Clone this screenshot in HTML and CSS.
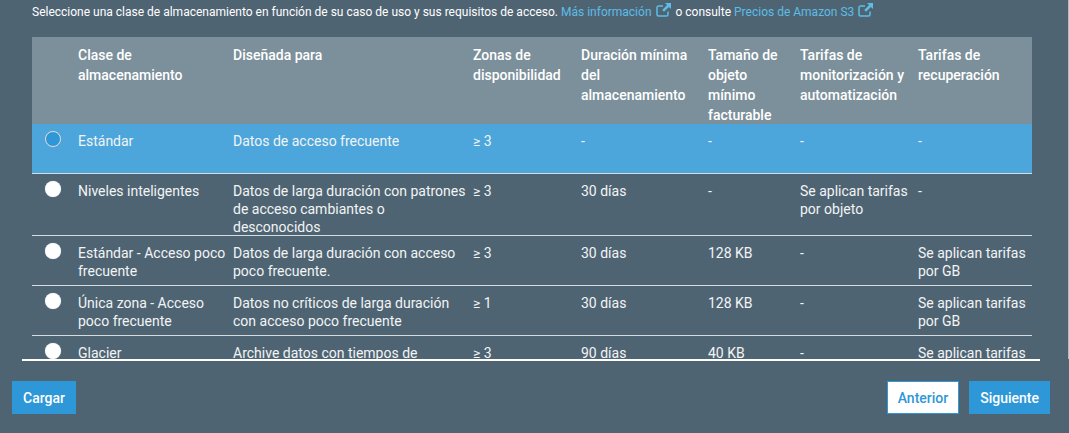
FILE: index.html
```html
<!DOCTYPE html>
<html lang="en">
<head>
    <meta charset="UTF-8">
    <title>Clase de almacenamiento</title>
    <link rel="stylesheet" href="styles.css">
</head>
<body>
    <p class="intro">
        Seleccione una clase de almacenamiento en función de su caso de uso y sus requisitos de acceso.
        <a href="#">Más información</a>
        <svg class="ext" viewBox="0 0 15 14"><path d="M12 8.5v3a1.5 1.5 0 0 1-1.5 1.5h-8A1.5 1.5 0 0 1 1 11.5v-7A1.5 1.5 0 0 1 2.500 3H7"/><path class="arrow" d="M9 0H15V6L12.900 3.900 8 8.800 6.200 7 11.100 2.100z"/></svg>
        o consulte
        <a href="#">Precios de Amazon S3</a>
        <svg class="ext" viewBox="0 0 15 14"><path d="M12 8.5v3a1.5 1.5 0 0 1-1.5 1.5h-8A1.5 1.5 0 0 1 1 11.5v-7A1.5 1.5 0 0 1 2.500 3H7"/><path class="arrow" d="M9 0H15V6L12.900 3.900 8 8.800 6.200 7 11.100 2.100z"/></svg>
    </p>

    <div class="table-wrap">
        <table class="classes">
            <colgroup>
                <col class="c-radio">
                <col class="c-name">
                <col class="c-for">
                <col class="c-zones">
                <col class="c-dur">
                <col class="c-size">
                <col class="c-mon">
                <col class="c-ret">
            </colgroup>
            <thead>
                <tr>
                    <th></th>
                    <th>Clase de almacenamiento</th>
                    <th>Diseñada para</th>
                    <th>Zonas de disponibilidad</th>
                    <th>Duración mínima del almacenamiento</th>
                    <th><div class="four-lines">Tamaño de objeto mínimo facturable</div></th>
                    <th>Tarifas de monitorización y automatización</th>
                    <th>Tarifas de recuperación</th>
                </tr>
            </thead>
            <tbody>
                <tr class="selected">
                    <td><span class="radio"></span></td>
                    <td>Estándar</td>
                    <td>Datos de acceso frecuente</td>
                    <td>≥ 3</td>
                    <td>-</td>
                    <td>-</td>
                    <td>-</td>
                    <td>-</td>
                </tr>
                <tr>
                    <td><span class="radio"></span></td>
                    <td>Niveles inteligentes</td>
                    <td><div class="three-lines">Datos de larga duración con patrones de acceso cambiantes o desconocidos</div></td>
                    <td>≥ 3</td>
                    <td>30 días</td>
                    <td>-</td>
                    <td>Se aplican tarifas por objeto</td>
                    <td>-</td>
                </tr>
                <tr>
                    <td><span class="radio"></span></td>
                    <td>Estándar - Acceso poco frecuente</td>
                    <td>Datos de larga duración con acceso poco frecuente.</td>
                    <td>≥ 3</td>
                    <td>30 días</td>
                    <td>128 KB</td>
                    <td>-</td>
                    <td>Se aplican tarifas por GB</td>
                </tr>
                <tr>
                    <td><span class="radio"></span></td>
                    <td>Única zona - Acceso poco frecuente</td>
                    <td>Datos no críticos de larga duración con acceso poco frecuente</td>
                    <td>≥ 1</td>
                    <td>30 días</td>
                    <td>128 KB</td>
                    <td>-</td>
                    <td>Se aplican tarifas por GB</td>
                </tr>
                <tr>
                    <td><span class="radio"></span></td>
                    <td>Glacier</td>
                    <td>Archive datos con tiempos de recuperación de minutos a horas</td>
                    <td>≥ 3</td>
                    <td>90 días</td>
                    <td>40 KB</td>
                    <td>-</td>
                    <td>Se aplican tarifas por GB</td>
                </tr>
            </tbody>
        </table>
    </div>

    <div class="actions">
        <button class="btn">Cargar</button>
        <div class="actions-right">
            <button class="btn btn-light">Anterior</button>
            <button class="btn">Siguiente</button>
        </div>
    </div>

    <div class="scroll-thumb"></div>
</body>
</html>
```

FILE: styles.css
```css
html, body {
    height: 100%;
}

body {
    margin: 0;
    overflow: hidden;
    background-color: #4f6473;
    color: #fff;
    font-family: Roboto, sans-serif;
    font-size: 14px;
}

a {
    color: #5dbde6;
    text-decoration: none;
}

.intro {
    margin: 0;
    padding: 3px 0 0 32px;
    height: 37px;
    box-sizing: border-box;
    font-size: 12px;
    line-height: 16px;
}

.ext {
    width: 15px;
    height: 14px;
    margin: 0 2px 0 1px;
    vertical-align: -1px;
    fill: none;
    stroke: #5dbde6;
    stroke-width: 1.5;
}

.ext .arrow {
    fill: #5dbde6;
    stroke: none;
}

.table-wrap {
    margin: 0 29px 0 22px;
    padding: 0 8px 0 10px;
    height: 324px;
    box-sizing: border-box;
    overflow: hidden;
    border-bottom: 2px solid #fff;
}

.classes {
    width: 1000px;
    table-layout: fixed;
    border-collapse: separate;
    border-spacing: 0;
}

.c-radio { width: 46px; }
.c-name { width: 155px; }
.c-for { width: 240px; }
.c-zones { width: 108px; }
.c-dur { width: 127px; }
.c-size { width: 92px; }
.c-mon { width: 118px; }
.c-ret { width: 114px; }

.classes th {
    height: 87px;
    padding: 8px 4px 0 0;
    box-sizing: border-box;
    background-color: #7c909b;
    font-weight: 500;
    line-height: 20px;
    text-align: left;
    vertical-align: top;
}

/* longest header, it runs down to the edge of the header band */
.four-lines {
    margin-bottom: -1px;
}

.classes td {
    height: 50px;
    box-sizing: border-box;
    padding: 8px 4px 0 0;
    line-height: 18px;
    vertical-align: top;
    border-bottom: 1px solid #d5dce0;
    color: #f2f4f5;
}

/* last line of this cell runs into the row border */
.three-lines {
    margin-bottom: -1px;
}

.selected td {
    background-color: #4ca6dc;
}

.radio {
    display: block;
    width: 16px;
    height: 16px;
    margin: -1px 0 0 13px;
    border-radius: 50%;
    background-color: #fff;
    box-shadow: 0 0 1px #9aa5ad;
}

.selected .radio {
    box-sizing: border-box;
    background-color: #2e97d8;
    border: 1.5px solid #d8dcdf;
}

.actions {
    display: flex;
    justify-content: space-between;
    padding: 20px 19px 0 12px;
}

.actions-right {
    display: flex;
    gap: 10px;
}

.btn {
    height: 33px;
    padding: 0 10px;
    border: 1px solid #2e97d8;
    background-color: #2e97d8;
    color: #fff;
    font-family: Roboto, sans-serif;
    font-size: 14px;
    font-weight: 500;
    cursor: pointer;
}

.btn-light {
    background-color: #fff;
    color: #2e97d8;
}

/* scrollbar of the dialog, only its edge shows at the window border */
.scroll-thumb {
    position: absolute;
    top: 0;
    right: 0;
    width: 1px;
    height: 359px;
    background-color: #b4bcc2;
}
```
